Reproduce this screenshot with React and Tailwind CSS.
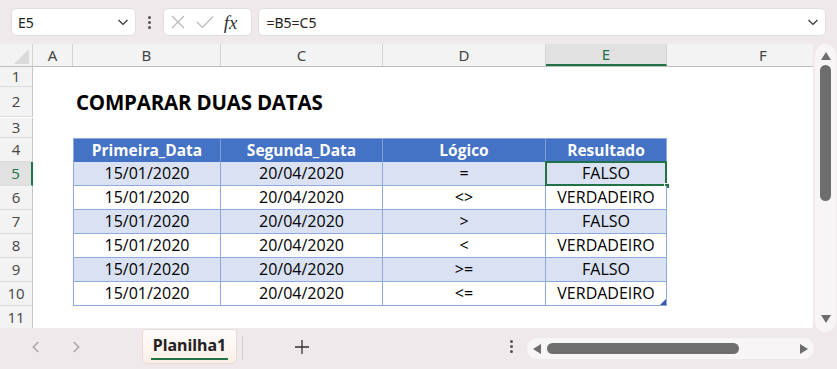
import React from 'react';

const cols = [
    { key: 'A', w: 'w-[40px]' },
    { key: 'B', w: 'w-[148px]' },
    { key: 'C', w: 'w-[162px]' },
    { key: 'D', w: 'w-[163px]' },
    { key: 'E', w: 'w-[121px]' },
];

const rows = [
    ['=', 'FALSO'],
    ['<>', 'VERDADEIRO'],
    ['>', 'FALSO'],
    ['<', 'VERDADEIRO'],
    ['>=', 'FALSO'],
    ['<=', 'VERDADEIRO'],
];

const Chevron = ({ className }) => (
    <svg viewBox="0 0 16 16" className={className} fill="none" stroke="currentColor" strokeWidth="1.2">
        <path d="M3.5 6 L8 10.5 L12.5 6" />
    </svg>
);

const RowHead = ({ n, h, selected }) => (
    <div
        className={`w-[33px] shrink-0 ${h} flex items-center justify-center border-b border-[#dcdcdc] text-[15px] ${
            selected ? 'bg-[#e1e1e1] text-[#217346] border-r-2 border-r-[#217346]' : 'bg-[#f3f3f3] text-[#444] border-r border-r-[#c6c6c6]'
        }`}
    >
        {n}
    </div>
);

const App = () => {
    return (
        <div className="w-[837px] h-[369px] overflow-hidden bg-[#efe9ec] flex flex-col" style={{ fontFamily: '"Noto Sans", sans-serif' }}>
            {/* formula bar */}
            <div className="h-[44px] flex items-center px-[11px] gap-0 shrink-0">
                <div className="w-[125px] h-[28px] bg-white border border-[#e2dde0] rounded-[5px] flex items-center justify-between pl-[6px] pr-[4px] text-[14px] text-[#222]">
                    <span>E5</span>
                    <Chevron className="w-[16px] h-[16px] text-[#333]" />
                </div>
                <div className="w-[27px] flex flex-col items-center gap-[2px]">
                    <span className="w-[3px] h-[3px] bg-[#555] rounded-full"></span>
                    <span className="w-[3px] h-[3px] bg-[#555] rounded-full"></span>
                    <span className="w-[3px] h-[3px] bg-[#555] rounded-full"></span>
                </div>
                <div className="w-[90px] h-[28px] bg-white border border-[#e2dde0] rounded-[5px] flex items-center px-[6px] gap-[10px]">
                    <svg viewBox="0 0 16 16" className="w-[16px] h-[16px]" fill="none" stroke="#b8b8b8" strokeWidth="1.2">
                        <path d="M2 2 L14 14 M14 2 L2 14" />
                    </svg>
                    <svg viewBox="0 0 18 16" className="w-[18px] h-[16px]" fill="none" stroke="#b8b8b8" strokeWidth="1.2">
                        <path d="M1 8 L6.5 13.5 L17 2.5" />
                    </svg>
                    <span className="text-[19px] italic text-[#333] leading-none" style={{ fontFamily: '"Liberation Serif", serif' }}>fx</span>
                </div>
                <div className="ml-[6px] w-[569px] h-[28px] bg-white border border-[#e2dde0] rounded-[5px] flex items-center justify-between pl-[7px] pr-[4px] text-[14px] text-[#222]">
                    <span>=B5=C5</span>
                    <Chevron className="w-[16px] h-[16px] text-[#333]" />
                </div>
            </div>

            {/* sheet */}
            <div className="flex h-[284px] shrink-0">
                <div className="w-[813px] flex flex-col bg-white overflow-hidden">
                    {/* column headers */}
                    <div className="flex h-[23px] shrink-0 bg-[#f3f3f3] border-b border-[#bdbdbd] text-[15px] text-[#444]">
                        <div className="w-[33px] shrink-0 relative border-r border-[#d4d4d4]">
                            <svg viewBox="0 0 10 10" className="absolute right-[3px] bottom-[2px] w-[15px] h-[15px]">
                                <path d="M10 0 L10 10 L0 10 Z" fill="#dadada" />
                            </svg>
                        </div>
                        {cols.map(c => (
                            <div
                                key={c.key}
                                className={`${c.w} shrink-0 flex items-center justify-center border-r border-[#d4d4d4] ${
                                    c.key === 'E' ? 'bg-[#e1e1e1] text-[#217346] border-b-2 border-b-[#217346]' : ''
                                }`}
                            >
                                {c.key}
                            </div>
                        ))}
                        <div className="w-[192px] shrink-0 flex items-center justify-center">F</div>
                    </div>

                    <div className="flex flex-col bg-white text-[16px] text-black" style={{ fontFamily: '"Open Sans", sans-serif' }}>
                        <div className="flex"><RowHead n="1" h="h-[20px]" /></div>
                        <div className="flex">
                            <RowHead n="2" h="h-[30px]" />
                            <div className="pl-[43px] flex items-center text-[20.5px] font-bold tracking-[-0.2px]">COMPARAR DUAS DATAS</div>
                        </div>
                        <div className="flex"><RowHead n="3" h="h-[20px]" /></div>
                        <div className="flex">
                            <RowHead n="4" h="h-[24px]" />
                            <div className="w-[40px] shrink-0"></div>
                            {['Primeira_Data', 'Segunda_Data', 'Lógico', 'Resultado'].map((t, i) => (
                                <div
                                    key={t}
                                    className={`${cols[i + 1].w} shrink-0 h-[24px] bg-[#4472c4] text-white font-bold text-[15.5px] flex items-center justify-center border-t border-[#8ea9db] ${
                                        i === 0 ? 'border-l' : ''
                                    } ${i === 3 ? 'border-r border-r-[#8ea9db]' : 'border-r border-r-[#7f9fd6]'}`}
                                >
                                    {t}
                                </div>
                            ))}
                        </div>
                        {rows.map((r, i) => {
                            const bg = i % 2 === 0 ? 'bg-[#d9e1f2]' : 'bg-white';
                            const vals = ['15/01/2020', '20/04/2020', r[0], r[1]];
                            return (
                                <div key={i} className="flex">
                                    <RowHead n={String(i + 5)} h="h-[24px]" selected={i === 0} />
                                    <div className="w-[40px] shrink-0"></div>
                                    {vals.map((v, j) => (
                                        <div
                                            key={j}
                                            className={`${cols[j + 1].w} shrink-0 h-[24px] ${bg} relative flex items-center justify-center border-r border-b border-[#8ea9db] ${
                                                j === 0 ? 'border-l' : ''
                                            }`}
                                        >
                                            {v}
                                            {i === 0 && j === 3 && (
                                                <>
                                                    <div className="absolute -left-[1px] -top-[1px] -right-[1px] -bottom-[1px] border-2 border-[#217346]"></div>
                                                    <div className="absolute -right-[4px] -bottom-[4px] w-[6px] h-[6px] bg-[#217346] border border-white"></div>
                                                </>
                                            )}
                                            {i === 5 && j === 3 && (
                                                <svg viewBox="0 0 6 6" className="absolute right-0 bottom-0 w-[6px] h-[6px]">
                                                    <path d="M6 0 L6 6 L0 6 Z" fill="#3a56b0" />
                                                </svg>
                                            )}
                                        </div>
                                    ))}
                                </div>
                            );
                        })}
                        <div className="flex"><RowHead n="11" h="h-[24px]" /></div>
                    </div>
                </div>

                {/* vertical scrollbar */}
                <div className="w-[24px] flex justify-center pl-[1px]">
                    <div className="w-[21px] h-[288px] bg-[#f7f5f6] rounded-full flex flex-col items-center pt-[8px] pb-[9px]">
                        <svg viewBox="0 0 10 8" className="w-[10px] h-[8px]"><path d="M5 0 L10 8 L0 8 Z" fill="#6d6d6d" /></svg>
                        <div className="w-[11px] h-[136px] mt-[5px] bg-[#6e6e6e] rounded-full"></div>
                        <div className="flex-1"></div>
                        <svg viewBox="0 0 10 8" className="w-[10px] h-[8px]"><path d="M0 0 L10 0 L5 8 Z" fill="#6d6d6d" /></svg>
                    </div>
                </div>
            </div>

            {/* sheet tabs */}
            <div className="flex-1 flex items-start">
                <div className="w-[142px] h-[37px] flex items-center">
                    <Chevron className="ml-[27px] w-[18px] h-[18px] text-[#a6a3a5] rotate-90" />
                    <Chevron className="ml-[22px] w-[18px] h-[18px] text-[#a6a3a5] -rotate-90" />
                </div>
                <div className="w-[95px] h-[35px] mt-[1px] rounded-b-[6px] rounded-t-[4px] border border-[#e6dcd6] bg-gradient-to-b from-[#fffdfc] to-[#fbeee6] flex flex-col items-center justify-center">
                    <span className="text-[16px] font-bold text-[#222] leading-[20px] mt-[2px]">Planilha1</span>
                    <span className="w-[77px] h-[2px] bg-[#217346] mt-[3px]"></span>
                </div>
                <div className="w-[1px] h-[24px] bg-[#cfcacd] ml-[5px] mt-[8px]"></div>
                <div className="ml-[51px] h-[37px] flex items-center">
                    <svg viewBox="0 0 16 16" className="w-[16px] h-[16px]" fill="none" stroke="#333" strokeWidth="1.3">
                        <path d="M8 1 V15 M1 8 H15" />
                    </svg>
                </div>
                <div className="ml-[195px] h-[37px] flex flex-col items-center justify-center gap-[2px] w-[12px]">
                    <span className="w-[3px] h-[3px] bg-[#555] rounded-full"></span>
                    <span className="w-[3px] h-[3px] bg-[#555] rounded-full"></span>
                    <span className="w-[3px] h-[3px] bg-[#555] rounded-full"></span>
                </div>
                <div className="ml-[10px] mt-[10px] w-[287px] h-[21px] bg-[#f7f5f6] rounded-full flex items-center px-[6px]">
                    <svg viewBox="0 0 8 10" className="w-[8px] h-[10px]"><path d="M0 5 L8 0 L8 10 Z" fill="#6d6d6d" /></svg>
                    <div className="ml-[6px] w-[192px] h-[11px] bg-[#6e6e6e] rounded-full"></div>
                    <div className="flex-1"></div>
                    <svg viewBox="0 0 8 10" className="w-[8px] h-[10px]"><path d="M8 5 L0 0 L0 10 Z" fill="#6d6d6d" /></svg>
                </div>
            </div>
        </div>
    );
};

export default App;
